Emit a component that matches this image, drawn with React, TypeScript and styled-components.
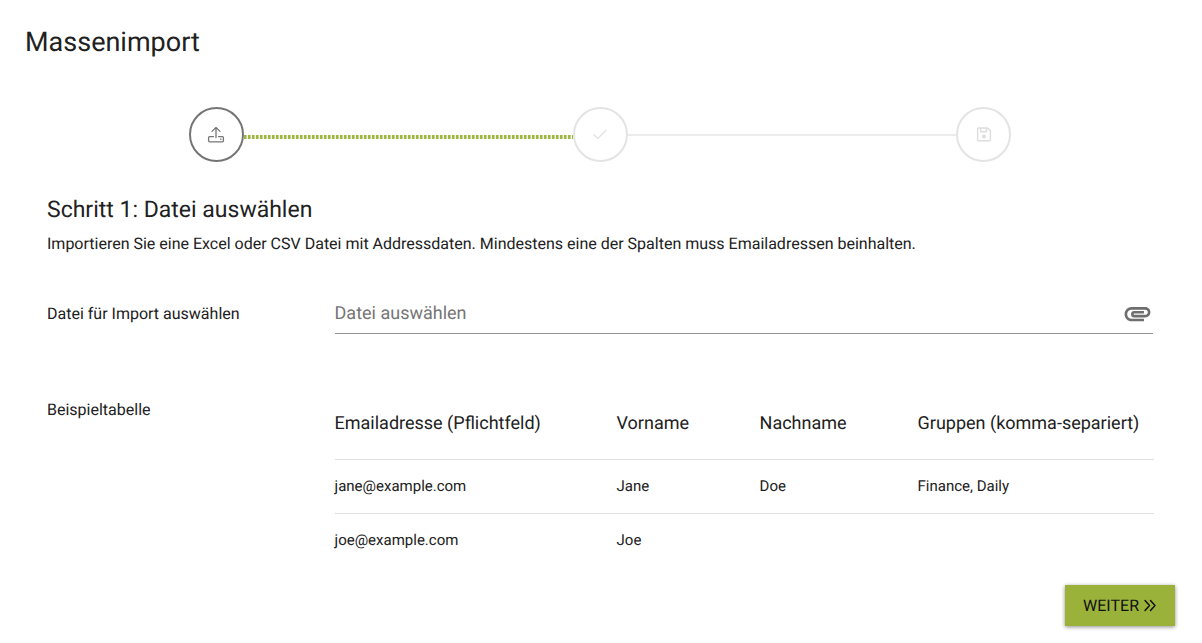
import React from "react";
import styled, { createGlobalStyle } from "styled-components";
import { MdAttachment } from "react-icons/md";

const GlobalStyle = createGlobalStyle`
  *, *::before, *::after { box-sizing: border-box; }
  body {
    margin: 0;
    background: #fff;
    color: #212121;
    font-family: Roboto, "Liberation Sans", sans-serif;
    font-size: 16px;
    line-height: 24px;
    text-rendering: geometricPrecision;
  }
`;

const Page = styled.main`
  padding: 24px 27px 17px 25px;
`;

const PageTitle = styled.h1`
  margin: 0;
  font-size: 27px;
  line-height: 36px;
  font-weight: 400;
`;

const Stepper = styled.ol`
  display: flex;
  align-items: center;
  margin: 47px 0 0;
  padding: 0 calc(100% / 6 - 28px);
  list-style: none;
`;

const StepItem = styled.li<{ $first?: boolean }>`
  display: flex;
  align-items: center;
  flex: ${(p) => (p.$first ? "none" : "1")};
`;

const StepCircle = styled.span<{ $active?: boolean }>`
  display: flex;
  align-items: center;
  justify-content: center;
  flex: none;
  width: 55px;
  height: 55px;
  border: 2px solid ${(p) => (p.$active ? "#757575" : "#e4e4e4")};
  border-radius: 50%;
  color: ${(p) => (p.$active ? "#757575" : "#dedede")};
`;

const Connector = styled.span<{ $active?: boolean }>`
  flex: 1;
  height: ${(p) => (p.$active ? "4px" : "2px")};
  margin-top: ${(p) => (p.$active ? "4px" : "0")};
  background: ${(p) =>
    p.$active
      ? "repeating-linear-gradient(90deg, #9fb545 0 2px, #c6d393 2px 3px, #f1f3e6 3px 4px)"
      : "#ececec"};
`;

const Content = styled.section`
  padding: 32px 22px 0 22px;
`;

const StepTitle = styled.h2`
  margin: 0;
  font-size: 23px;
  line-height: 32px;
  font-weight: 400;
`;

const Description = styled.p`
  margin: 6px 0 0;
`;

const FormRow = styled.div<{ $gap: number }>`
  display: grid;
  grid-template-columns: 26% 1fr;
  margin-top: ${(p) => p.$gap}px;
`;

const Label = styled.label`
  padding-top: 8px;
`;

const FileField = styled.div`
  display: flex;
  align-items: center;
  height: 40px;
  border-bottom: 1px solid #949494;
`;

const FileInput = styled.input`
  flex: 1;
  min-width: 0;
  padding: 0;
  border: 0;
  outline: 0;
  background: none;
  color: #212121;
  font: 18px/24px Roboto, "Liberation Sans", sans-serif;
  text-rendering: inherit;
  &::placeholder { color: #757575; opacity: 1; }
`;

const IconButton = styled.button`
  display: flex;
  padding: 0;
  border: 0;
  background: none;
  color: #6e6e6e;
  cursor: pointer;
`;

const TableLabel = styled.span`
  padding-top: 8px;
`;

const Table = styled.table`
  width: 100%;
  table-layout: fixed;
  border-collapse: collapse;
  text-align: left;
`;

const HeadCell = styled.th`
  height: 69px;
  padding: 0;
  border-bottom: 1px solid #e0e0e0;
  font-size: 18px;
  font-weight: 400;
  white-space: nowrap;
`;

const Row = styled.tr`
  &:not(:last-child) td { border-bottom: 1px solid #e0e0e0; }
`;

const Cell = styled.td`
  height: 54px;
  padding: 0;
  font-size: 15px;
`;

const Actions = styled.div`
  display: flex;
  justify-content: flex-end;
  margin-top: 18px;
`;

const NextButton = styled.button`
  display: flex;
  align-items: center;
  gap: 4px;
  height: 41px;
  padding: 0 18px;
  border: 0;
  background: #9ab23a;
  box-shadow: 0 1px 4px rgba(0, 0, 0, 0.45);
  color: #111;
  font: 16px/24px Roboto, "Liberation Sans", sans-serif;
  text-rendering: inherit;
  text-transform: uppercase;
  cursor: pointer;
`;

const line = {
  fill: "none",
  stroke: "currentColor",
  strokeLinecap: "round",
  strokeLinejoin: "round",
} as const;

const UploadIcon = () => (
  <svg width="18" height="18" viewBox="0 0 18 18" strokeWidth="1.3" aria-hidden="true" {...line}>
    <path d="M9 11.6V2M5 5.4L9 1.4L13 5.4" />
    <path d="M6.5 10.6H2.6a1 1 0 0 0-1 1v3.2a1 1 0 0 0 1 1h12.8a1 1 0 0 0 1-1v-3.2a1 1 0 0 0-1-1H11.5M13.6 13.2h.4" />
  </svg>
);

const CheckIcon = () => (
  <svg width="18" height="18" viewBox="0 0 18 18" strokeWidth="1.2" aria-hidden="true" {...line}>
    <path d="M2.8 8.6L7 12.4L15 4.2" />
  </svg>
);

const SaveIcon = () => (
  <svg width="18" height="18" viewBox="0 0 18 18" strokeWidth="1.4" aria-hidden="true" {...line}>
    <path d="M2.6 3a1 1 0 0 1 1-1h8.8l3 2.6v9.2a1 1 0 0 1-1 1H3.6a1 1 0 0 1-1-1zM5.6 2.2v3.6h5.8V2.2" />
    <circle cx="9" cy="10.4" r="1.3" fill="currentColor" />
  </svg>
);

const ForwardIcon = () => (
  <svg width="14" height="14" viewBox="0 0 14 14" strokeWidth="1.5" aria-hidden="true" {...line}>
    <path d="M2 1.5L6.5 6.5L2 11.5M7.5 1.5L12 6.5L7.5 11.5" />
  </svg>
);

const people = [
  { email: "jane@example.com", first: "Jane", last: "Doe", groups: "Finance, Daily" },
  { email: "joe@example.com", first: "Joe", last: "", groups: "" },
];

export default function App() {
  return (
    <>
      <GlobalStyle />
      <Page>
        <PageTitle>Massenimport</PageTitle>
        <Stepper>
          <StepItem $first aria-current="step">
            <StepCircle $active><UploadIcon /></StepCircle>
          </StepItem>
          <StepItem>
            <Connector $active />
            <StepCircle><CheckIcon /></StepCircle>
          </StepItem>
          <StepItem>
            <Connector />
            <StepCircle><SaveIcon /></StepCircle>
          </StepItem>
        </Stepper>
        <Content>
          <StepTitle>Schritt 1: Datei auswählen</StepTitle>
          <Description>
            Importieren Sie eine Excel oder CSV Datei mit Addressdaten. Mindestens eine der Spalten muss Emailadressen beinhalten.
          </Description>
          <FormRow $gap={38}>
            <Label htmlFor="import-file">Datei für Import auswählen</Label>
            <FileField>
              <FileInput id="import-file" type="text" readOnly placeholder="Datei auswählen" />
              <IconButton type="button" aria-label="Datei anhängen">
                <MdAttachment size={31} />
              </IconButton>
            </FileField>
          </FormRow>
          <FormRow $gap={56}>
            <TableLabel id="example-label">Beispieltabelle</TableLabel>
            <Table aria-labelledby="example-label">
              <colgroup>
                <col width="282" />
                <col width="143" />
                <col width="158" />
                <col width="236" />
              </colgroup>
              <thead>
                <tr>
                  <HeadCell scope="col">Emailadresse (Pflichtfeld)</HeadCell>
                  <HeadCell scope="col">Vorname</HeadCell>
                  <HeadCell scope="col">Nachname</HeadCell>
                  <HeadCell scope="col">Gruppen (komma-separiert)</HeadCell>
                </tr>
              </thead>
              <tbody>
                {people.map((p) => (
                  <Row key={p.email}>
                    <Cell>{p.email}</Cell>
                    <Cell>{p.first}</Cell>
                    <Cell>{p.last}</Cell>
                    <Cell>{p.groups}</Cell>
                  </Row>
                ))}
              </tbody>
            </Table>
          </FormRow>
        </Content>
        <Actions>
          <NextButton type="button">Weiter <ForwardIcon /></NextButton>
        </Actions>
      </Page>
    </>
  );
}
